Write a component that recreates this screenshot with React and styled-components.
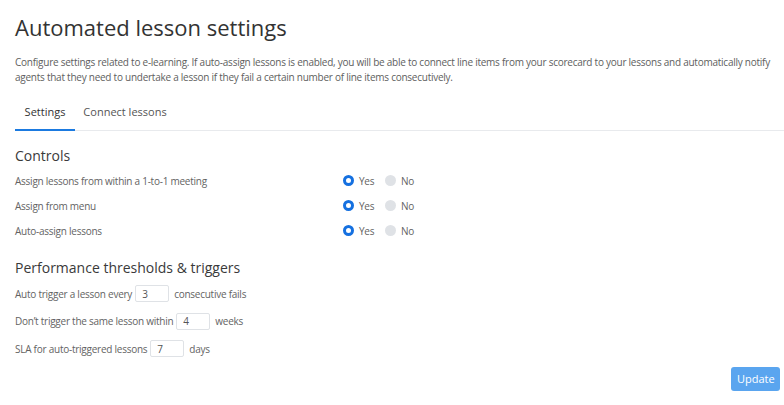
import React, { useState } from 'react';
import styled, { createGlobalStyle } from 'styled-components';

const GlobalStyle = createGlobalStyle`
  html, body {
    margin: 0;
    padding: 0;
    background: #ffffff;
    font-family: 'Open Sans', 'Liberation Sans', sans-serif;
  }
`;

const Page = styled.div`
  width: 784px;
  height: 405px;
  box-sizing: border-box;
  padding: 12px 0 0 15px;
  overflow: hidden;
`;

const Title = styled.h1`
  margin: 0;
  font-size: 22px;
  font-weight: 400;
  color: #333;
  line-height: 30px;
`;

const Description = styled.p`
  margin: 13px 0 0;
  padding-right: 8px;
  font-size: 10px;
  letter-spacing: -0.25px;
  line-height: 15px;
  color: #5e5e5e;
`;

const Tabs = styled.div`
  display: flex;
  margin-top: 18px;
  border-bottom: 1px solid #e8eaed;
`;

const Tab = styled.div`
  width: ${(p) => p.width}px;
  padding: 0 0 8px;
  text-align: center;
  font-size: 11px;
  line-height: 18px;
  color: ${(p) => (p.active ? '#333' : '#555')};
  border-bottom: 2px solid ${(p) => (p.active ? '#1b7ae0' : 'transparent')};
  margin-bottom: -1px;
  cursor: pointer;
`;

const SectionTitle = styled.h2`
  margin: 15px 0 0;
  font-size: 14px;
  font-weight: 400;
  color: #3a3a3a;
  line-height: 20px;
`;

const Rows = styled.div`
  margin-top: 2px;
  display: flex;
  flex-direction: column;
`;

const Row = styled.div`
  display: flex;
  align-items: center;
  height: 25px;
  font-size: 10px;
  letter-spacing: -0.25px;
  color: #636363;
`;

const Label = styled.div`
  width: 328px;
`;

const RadioOption = styled.label`
  display: flex;
  align-items: center;
  gap: 5px;
  margin-right: 5px;
  width: 37px;
  cursor: pointer;
`;

const RadioDot = styled.span`
  width: 11px;
  height: 11px;
  border-radius: 50%;
  box-sizing: border-box;
  background: ${(p) => (p.checked ? '#fff' : '#dfe2e6')};
  border: ${(p) => (p.checked ? '3px solid #1570e0' : 'none')};
`;

const InputRow = styled.div`
  display: flex;
  align-items: center;
  height: 27.5px;
  font-size: 10px;
  letter-spacing: -0.25px;
  color: #636363;
`;

const NumberBox = styled.input`
  width: 34px;
  height: 17px;
  box-sizing: border-box;
  margin: 0 5px 0 3px;
  padding: 0 6px;
  border: 1px solid #dfe2e6;
  border-radius: 2px;
  font-family: inherit;
  font-size: 10px;
  color: #555;
  outline: none;
`;

const Footer = styled.div`
  display: flex;
  justify-content: flex-end;
  padding-right: 4px;
  margin-top: 4px;
`;

const UpdateButton = styled.button`
  width: 49px;
  height: 24px;
  border: none;
  border-radius: 3px;
  background: #5aa5ef;
  color: #fff;
  font-family: inherit;
  font-size: 11px;
  cursor: pointer;
`;

const controls = [
  { id: 'meeting', label: 'Assign lessons from within a 1-to-1 meeting' },
  { id: 'menu', label: 'Assign from menu' },
  { id: 'auto', label: 'Auto-assign lessons' },
];

const thresholds = [
  { id: 'fails', before: 'Auto trigger a lesson every', after: 'consecutive fails' },
  { id: 'weeks', before: 'Don’t trigger the same lesson within', after: 'weeks' },
  { id: 'sla', before: 'SLA for auto-triggered lessons', after: 'days' },
];

const App = () => {
  const [tab, setTab] = useState('settings');
  const [choices, setChoices] = useState({ meeting: true, menu: true, auto: true });
  const [values, setValues] = useState({ fails: '3', weeks: '4', sla: '7' });

  return (
    <Page>
      <GlobalStyle />
      <Title>Automated lesson settings</Title>
      <Description>
        Configure settings related to e-learning. If auto-assign lessons is enabled, you will be able to connect line
        items from your scorecard to your lessons and automatically notify agents that they need to undertake a lesson
        if they fail a certain number of line items consecutively.
      </Description>
      <Tabs>
        <Tab width={60} active={tab === 'settings'} onClick={() => setTab('settings')}>
          Settings
        </Tab>
        <Tab width={100} active={tab === 'connect'} onClick={() => setTab('connect')}>
          Connect lessons
        </Tab>
      </Tabs>

      <SectionTitle>Controls</SectionTitle>
      <Rows>
        {controls.map((c) => (
          <Row key={c.id}>
            <Label>{c.label}</Label>
            <RadioOption onClick={() => setChoices({ ...choices, [c.id]: true })}>
              <RadioDot checked={choices[c.id]} />
              Yes
            </RadioOption>
            <RadioOption onClick={() => setChoices({ ...choices, [c.id]: false })}>
              <RadioDot checked={!choices[c.id]} />
              No
            </RadioOption>
          </Row>
        ))}
      </Rows>

      <SectionTitle>Performance thresholds &amp; triggers</SectionTitle>
      <Rows>
        {thresholds.map((t) => (
          <InputRow key={t.id}>
            {t.before}
            <NumberBox
              value={values[t.id]}
              onChange={(e) => setValues({ ...values, [t.id]: e.target.value })}
            />
            {t.after}
          </InputRow>
        ))}
      </Rows>

      <Footer>
        <UpdateButton>Update</UpdateButton>
      </Footer>
    </Page>
  );
};

export default App;
